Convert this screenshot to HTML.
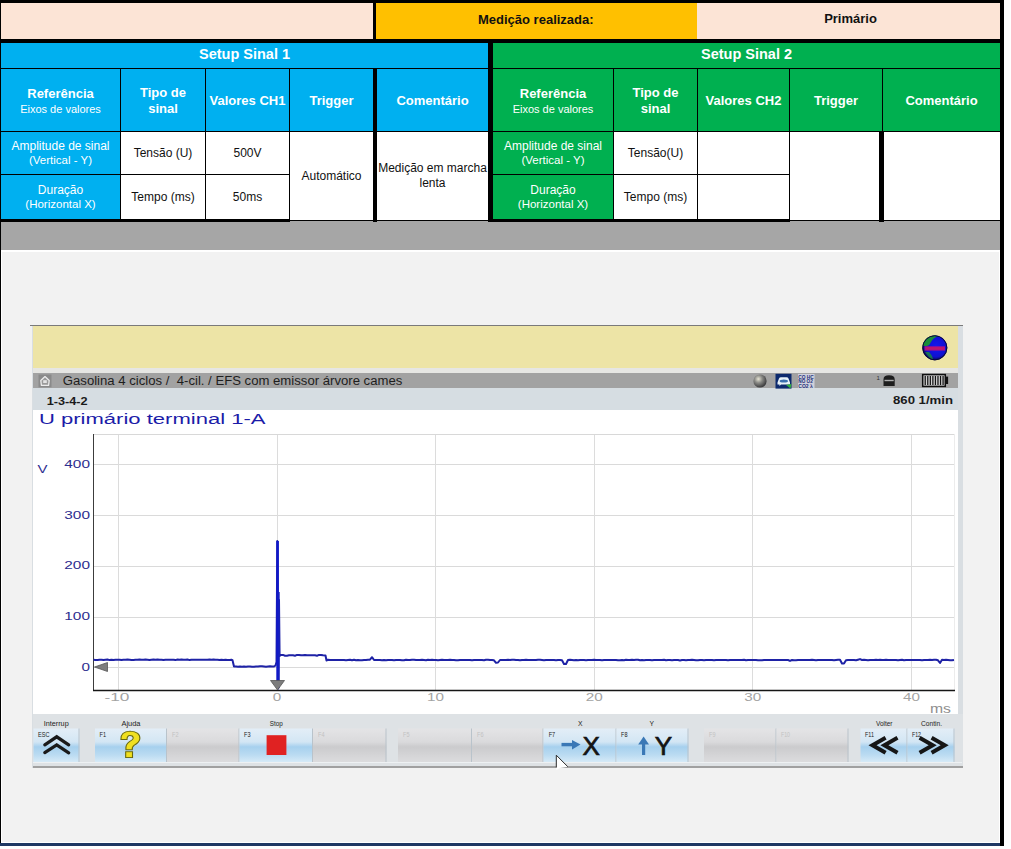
<!DOCTYPE html>
<html><head><meta charset="utf-8">
<style>
html,body{margin:0;padding:0;}
body{width:1011px;height:849px;position:relative;overflow:hidden;background:#fff;font-family:"Liberation Sans",sans-serif;}
.r{position:absolute;}
.c{position:absolute;display:flex;align-items:center;justify-content:center;text-align:center;white-space:nowrap;flex-direction:column;}
.pe{background:#FCE4D6;}
.bl{background:#00B0F0;}
.gr{background:#00B050;}
.wh{background:#fff;}
.hb{font-weight:bold;font-size:13px;color:#fff;line-height:16px;padding-top:2px;box-sizing:border-box;}
.hs{font-size:11px;font-weight:normal;line-height:14px;}
.rl{font-size:12px;color:#fff;line-height:14px;}
.rl span{font-size:11.5px;}
.dt{font-size:12px;color:#111;line-height:15px;}
</style></head>
<body>
<!-- black base for table -->
<div class="r" style="left:0;top:0;width:1004px;height:222px;background:#000"></div>
<!-- row 1 -->
<div class="c pe" style="left:1px;top:3px;width:372px;height:36px"></div>
<div class="c" style="left:376px;top:3px;width:321px;height:36px;background:#FFC000;font-weight:bold;font-size:13px;color:#111;align-items:flex-start"><span style="padding-left:102px;position:relative;top:-2px">Medição realizada:</span></div>
<div class="c pe" style="left:697px;top:3px;width:303px;height:36px;font-weight:bold;font-size:13px;color:#111"><span style="margin-left:4px;position:relative;top:-2.5px">Primário</span></div>
<!-- row 2 -->
<div class="c bl" style="left:1px;top:43px;width:487px;height:25px;font-weight:bold;font-size:14.5px;color:#fff"><span style="position:relative;top:-2px">Setup Sinal 1</span></div>
<div class="c gr" style="left:493px;top:43px;width:507px;height:25px;font-weight:bold;font-size:14.5px;color:#fff"><span style="position:relative;top:-2px">Setup Sinal 2</span></div>
<!-- row 3 headers blue -->
<div class="c bl hb" style="left:1px;top:69px;width:119px;height:62px">Referência<span class="hs">Eixos de valores</span></div>
<div class="c bl hb" style="left:121px;top:69px;width:84px;height:62px">Tipo de<br>sinal</div>
<div class="c bl hb" style="left:206px;top:69px;width:83px;height:62px">Valores CH1</div>
<div class="c bl hb" style="left:290px;top:69px;width:83px;height:62px">Trigger</div>
<div class="c bl hb" style="left:377px;top:69px;width:111px;height:62px">Comentário</div>
<!-- row 3 headers green -->
<div class="c gr hb" style="left:493px;top:69px;width:120px;height:62px">Referência<span class="hs">Eixos de valores</span></div>
<div class="c gr hb" style="left:614px;top:69px;width:83px;height:62px">Tipo de<br>sinal</div>
<div class="c gr hb" style="left:698px;top:69px;width:91px;height:62px">Valores CH2</div>
<div class="c gr hb" style="left:790px;top:69px;width:92px;height:62px">Trigger</div>
<div class="c gr hb" style="left:883px;top:69px;width:117px;height:62px">Comentário</div>
<!-- rows 4-5 blue side -->
<div class="c bl rl" style="left:1px;top:132px;width:119px;height:42px">Amplitude de sinal<span>(Vertical - Y)</span></div>
<div class="c bl rl" style="left:1px;top:175px;width:119px;height:44px">Duração<span>(Horizontal X)</span></div>
<div class="c wh dt" style="left:121px;top:132px;width:84px;height:42px">Tensão (U)</div>
<div class="c wh dt" style="left:121px;top:175px;width:84px;height:44px">Tempo (ms)</div>
<div class="c wh dt" style="left:206px;top:132px;width:83px;height:42px">500V</div>
<div class="c wh dt" style="left:206px;top:175px;width:83px;height:44px">50ms</div>
<div class="c wh dt" style="left:290px;top:132px;width:83px;height:88px">Automático</div>
<div class="c wh dt" style="left:377px;top:132px;width:111px;height:88px">Medição em marcha<br>lenta</div>
<!-- rows 4-5 green side -->
<div class="c gr rl" style="left:493px;top:132px;width:120px;height:42px">Amplitude de sinal<span>(Vertical - Y)</span></div>
<div class="c gr rl" style="left:493px;top:175px;width:120px;height:44px">Duração<span>(Horizontal X)</span></div>
<div class="c wh dt" style="left:614px;top:132px;width:83px;height:42px">Tensão(U)</div>
<div class="c wh dt" style="left:614px;top:175px;width:83px;height:44px">Tempo (ms)</div>
<div class="c wh" style="left:698px;top:132px;width:91px;height:42px"></div>
<div class="c wh" style="left:698px;top:175px;width:91px;height:44px"></div>
<div class="c wh" style="left:790px;top:132px;width:89px;height:88px"></div>
<div class="c wh" style="left:884px;top:132px;width:116px;height:88px"></div>

<!-- gray band & background -->
<div class="r" style="left:1px;top:222px;width:999px;height:28px;background:#A6A6A6"></div>
<div class="r" style="left:290px;top:221px;width:83px;height:1px;background:#A6A6A6"></div>
<div class="r" style="left:377px;top:221px;width:111px;height:1px;background:#A6A6A6"></div>
<div class="r" style="left:790px;top:221px;width:89px;height:1px;background:#A6A6A6"></div>
<div class="r" style="left:884px;top:221px;width:116px;height:1px;background:#A6A6A6"></div>
<div class="r" style="left:0;top:222px;width:1px;height:624px;background:#000"></div>
<div class="r" style="left:1px;top:250px;width:999px;height:593px;background:#fff"></div>
<div class="r" style="left:2px;top:252px;width:997px;height:590px;background:#F2F2F2"></div>
<div class="r" style="left:0;top:843px;width:1000px;height:3px;background:#1F3864"></div>
<div class="r" style="left:1000px;top:0;width:4px;height:846px;background:#000"></div>

<!-- oscilloscope screenshot -->
<div class="r" style="left:32px;top:325px;width:931px;height:443px;background:#D9DEE2"></div>
<div class="r" style="left:30px;top:325px;width:933px;height:1px;background:#7a7a7a"></div>
<div class="r" style="left:33px;top:326px;width:925px;height:42px;background:#EDE4A6"></div>
<div class="r" style="left:33px;top:368px;width:925px;height:5px;background:#E6E6E3"></div>
<div class="r" style="left:33px;top:373px;width:925px;height:15px;background:#A2A2A2"></div>
<div class="r" style="left:33px;top:388px;width:925px;height:22px;background:#D6DDE2"></div>
<div class="r" style="left:33px;top:410px;width:925px;height:304px;background:#fff"></div>
<div class="r" style="left:33px;top:714px;width:930px;height:52px;background:#DEE2E5"></div>
<div class="r" style="left:33px;top:766px;width:930px;height:2px;background:#a0a0a0"></div>

<svg class="r" style="left:0;top:0" width="1011" height="849" viewBox="0 0 1011 849" font-family="Liberation Sans, sans-serif">
<defs>
<linearGradient id="gb" x1="0" y1="0" x2="0" y2="1">
<stop offset="0" stop-color="#e3eef7"/><stop offset="0.4" stop-color="#d3e6f4"/><stop offset="0.55" stop-color="#a6d0ee"/><stop offset="0.8" stop-color="#bcdcf2"/><stop offset="1" stop-color="#d6eaf7"/>
</linearGradient>
<linearGradient id="gg" x1="0" y1="0" x2="0" y2="1">
<stop offset="0" stop-color="#e4e4e6"/><stop offset="0.4" stop-color="#dadadc"/><stop offset="0.55" stop-color="#cbcbcd"/><stop offset="1" stop-color="#dcdcde"/>
</linearGradient>
<radialGradient id="ball" cx="0.38" cy="0.35" r="0.65">
<stop offset="0" stop-color="#e6e4d4"/><stop offset="0.45" stop-color="#8a8a86"/><stop offset="1" stop-color="#3c3c3e"/>
</radialGradient>
</defs>
<line x1="94" y1="667.5" x2="954" y2="667.5" stroke="#dadada" stroke-width="1"/>
<line x1="94" y1="617.5" x2="954" y2="617.5" stroke="#dadada" stroke-width="1"/>
<line x1="94" y1="566.5" x2="954" y2="566.5" stroke="#dadada" stroke-width="1"/>
<line x1="94" y1="515.5" x2="954" y2="515.5" stroke="#dadada" stroke-width="1"/>
<line x1="94" y1="464.5" x2="954" y2="464.5" stroke="#dadada" stroke-width="1"/>
<line x1="118.5" y1="434" x2="118.5" y2="690" stroke="#dcdcdc" stroke-width="1"/>
<line x1="277.5" y1="434" x2="277.5" y2="690" stroke="#dcdcdc" stroke-width="1"/>
<line x1="435.5" y1="434" x2="435.5" y2="690" stroke="#dcdcdc" stroke-width="1"/>
<line x1="594.5" y1="434" x2="594.5" y2="690" stroke="#dcdcdc" stroke-width="1"/>
<line x1="752.5" y1="434" x2="752.5" y2="690" stroke="#dcdcdc" stroke-width="1"/>
<line x1="911.5" y1="434" x2="911.5" y2="690" stroke="#dcdcdc" stroke-width="1"/>
<line x1="94" y1="434.5" x2="954" y2="434.5" stroke="#d8d8d8" stroke-width="1"/>
<line x1="954.5" y1="434" x2="954.5" y2="690" stroke="#ececec" stroke-width="1"/>
<line x1="93.5" y1="434" x2="93.5" y2="691" stroke="#3c3c3c" stroke-width="1"/>
<line x1="93" y1="690.5" x2="955" y2="690.5" stroke="#161616" stroke-width="1.3"/>
<text x="81.5" y="671.0" font-size="11" fill="#2d2d8f" textLength="8.5" lengthAdjust="spacingAndGlyphs">0</text>
<text x="64.3" y="620.2" font-size="11" fill="#2d2d8f" textLength="25.7" lengthAdjust="spacingAndGlyphs">100</text>
<text x="64.3" y="569.4" font-size="11" fill="#2d2d8f" textLength="25.7" lengthAdjust="spacingAndGlyphs">200</text>
<text x="64.3" y="518.7" font-size="11" fill="#2d2d8f" textLength="25.7" lengthAdjust="spacingAndGlyphs">300</text>
<text x="64.3" y="467.9" font-size="11" fill="#2d2d8f" textLength="25.7" lengthAdjust="spacingAndGlyphs">400</text>
<text x="37.5" y="472.7" font-size="11" fill="#2d2d8f" textLength="10" lengthAdjust="spacingAndGlyphs">V</text>
<text x="104.4" y="701" font-size="11" fill="#a3a3a3" textLength="25" lengthAdjust="spacingAndGlyphs">-10</text>
<text x="272.8" y="701" font-size="11" fill="#a3a3a3" textLength="8.5" lengthAdjust="spacingAndGlyphs">0</text>
<text x="427.1" y="701" font-size="11" fill="#a3a3a3" textLength="17" lengthAdjust="spacingAndGlyphs">10</text>
<text x="585.7" y="701" font-size="11" fill="#a3a3a3" textLength="17" lengthAdjust="spacingAndGlyphs">20</text>
<text x="744.3" y="701" font-size="11" fill="#a3a3a3" textLength="17" lengthAdjust="spacingAndGlyphs">30</text>
<text x="902.9" y="701" font-size="11" fill="#a3a3a3" textLength="17" lengthAdjust="spacingAndGlyphs">40</text>
<text x="930" y="712.6" font-size="13" fill="#8e8e8e" textLength="21" lengthAdjust="spacingAndGlyphs">ms</text>
<path d="M93.5,659.8 L95.5,660.1 L97.5,660.1 L99.5,659.8 L101.5,659.8 L103.5,660.1 L105.5,659.8 L107.5,659.5 L109.5,660.1 L111.5,659.8 L113.5,660.1 L115.5,659.8 L117.5,659.8 L119.5,659.8 L121.5,660.1 L123.5,659.8 L125.5,659.8 L127.5,659.5 L129.5,659.8 L131.5,660.1 L133.5,660.1 L135.5,659.8 L137.5,659.8 L139.5,659.5 L141.5,659.8 L143.5,659.8 L145.5,659.5 L147.5,659.8 L149.5,660.1 L151.5,659.8 L153.5,659.5 L155.5,659.8 L157.5,659.5 L159.5,659.8 L161.5,659.8 L163.5,660.1 L165.5,659.8 L167.5,659.8 L169.5,659.8 L171.5,659.8 L173.5,659.8 L175.5,660.1 L177.5,659.5 L179.5,659.8 L181.5,659.5 L183.5,659.8 L185.5,659.8 L187.5,659.5 L189.5,660.1 L191.5,659.8 L193.5,659.8 L195.5,659.8 L197.5,659.8 L199.5,659.8 L201.5,659.8 L203.5,659.8 L205.5,659.8 L207.5,659.8 L209.5,659.5 L211.5,659.8 L213.5,659.5 L215.5,659.8 L217.5,659.8 L219.5,660.1 L221.5,659.8 L223.5,660.1 L225.5,659.8 L227.5,660.1 L229.5,660.1 L231.5,659.8 L232.5,660.2 L234.0,666.5 L236.0,666.5 L238.0,666.8 L240.0,666.5 L242.0,666.8 L244.0,666.5 L246.0,666.8 L248.0,666.5 L250.0,666.5 L252.0,666.8 L254.0,666.8 L256.0,666.5 L258.0,666.5 L260.0,666.2 L262.0,666.2 L264.0,666.5 L266.0,666.8 L268.0,666.5 L270.0,666.2 L272.0,666.5 L274.0,666.5 L275.5,665.5 L276.5,662.0 L277.3,541.0 L278.2,688.5 L279.0,600.0 L279.6,656.0 L281.0,655.0 L283.0,654.9 L285.0,655.7 L287.0,655.7 L289.0,655.3 L291.0,655.3 L293.0,655.3 L295.0,655.7 L297.0,654.9 L299.0,654.9 L301.0,655.3 L303.0,655.3 L305.0,654.9 L307.0,655.3 L309.0,655.3 L311.0,655.3 L313.0,655.3 L315.0,655.3 L317.0,655.7 L319.0,654.9 L321.0,654.9 L323.0,655.3 L325.5,655.5 L326.5,660.5 L328.0,659.7 L330.0,660.0 L332.0,660.0 L334.0,660.0 L336.0,660.0 L338.0,660.0 L340.0,660.0 L342.0,660.0 L344.0,660.0 L346.0,660.3 L348.0,660.0 L350.0,659.7 L352.0,660.3 L354.0,659.7 L356.0,660.3 L358.0,660.0 L360.0,660.3 L362.0,660.3 L364.0,660.0 L366.0,660.0 L368.0,659.7 L370.0,659.7 L372.0,657.2 L374.0,660.0 L376.0,660.0 L378.0,660.0 L380.0,660.0 L382.0,660.3 L384.0,660.0 L386.0,660.3 L388.0,660.0 L390.0,660.0 L392.0,660.0 L394.0,660.3 L396.0,660.0 L398.0,660.0 L400.0,660.0 L402.0,660.3 L404.0,660.3 L406.0,659.7 L408.0,660.0 L410.0,660.0 L412.0,659.7 L414.0,659.7 L416.0,660.0 L418.0,660.0 L420.0,660.0 L422.0,659.7 L424.0,660.0 L426.0,660.3 L428.0,659.7 L430.0,660.0 L432.0,659.7 L434.0,660.0 L436.0,660.0 L438.0,660.3 L440.0,660.0 L442.0,659.7 L444.0,660.0 L446.0,660.0 L448.0,660.0 L450.0,659.7 L452.0,660.0 L454.0,660.0 L456.0,660.3 L458.0,660.3 L460.0,660.0 L462.0,660.0 L464.0,660.0 L466.0,660.0 L468.0,660.0 L470.0,660.0 L472.0,660.3 L474.0,660.0 L476.0,660.0 L478.0,660.0 L480.0,660.0 L482.0,660.0 L484.0,660.3 L486.0,659.7 L488.0,659.7 L490.0,660.0 L492.0,660.0 L494.0,660.3 L496.0,662.8 L498.0,662.5 L500.0,660.0 L502.0,660.0 L504.0,660.0 L506.0,660.0 L508.0,659.7 L510.0,660.0 L512.0,659.7 L514.0,659.7 L516.0,660.0 L518.0,660.0 L520.0,660.3 L522.0,660.0 L524.0,660.0 L526.0,659.7 L528.0,660.0 L530.0,660.0 L532.0,660.0 L534.0,660.0 L536.0,660.0 L538.0,659.7 L540.0,659.7 L542.0,660.0 L544.0,660.3 L546.0,660.0 L548.0,660.0 L550.0,660.0 L552.0,660.0 L554.0,660.0 L556.0,660.3 L558.0,660.0 L560.0,660.0 L562.0,660.3 L564.0,664.0 L566.0,664.0 L568.0,660.0 L570.0,659.7 L572.0,660.0 L574.0,660.3 L576.0,660.0 L578.0,660.3 L580.0,660.0 L582.0,660.0 L584.0,660.0 L586.0,660.3 L588.0,660.0 L590.0,660.0 L592.0,660.0 L594.0,659.7 L596.0,660.0 L598.0,660.0 L600.0,660.0 L602.0,660.3 L604.0,660.0 L606.0,660.0 L608.0,660.0 L610.0,660.0 L612.0,660.0 L614.0,660.0 L616.0,660.0 L618.0,660.3 L620.0,660.3 L622.0,660.0 L624.0,660.3 L626.0,659.7 L628.0,660.0 L630.0,660.0 L632.0,659.7 L634.0,660.0 L636.0,659.7 L638.0,659.7 L640.0,660.3 L642.0,660.0 L644.0,660.3 L646.0,660.0 L648.0,660.0 L650.0,660.0 L652.0,660.3 L654.0,660.0 L656.0,660.0 L658.0,660.0 L660.0,660.0 L662.0,660.0 L664.0,659.7 L666.0,660.3 L668.0,660.0 L670.0,660.0 L672.0,660.3 L674.0,660.0 L676.0,660.0 L678.0,660.0 L680.0,660.5 L682.0,660.0 L684.0,660.0 L686.0,660.3 L688.0,660.0 L690.0,660.0 L692.0,659.7 L694.0,660.0 L696.0,660.3 L698.0,660.3 L700.0,660.0 L702.0,660.0 L704.0,660.3 L706.0,660.0 L708.0,660.0 L710.0,660.0 L712.0,660.0 L714.0,660.3 L716.0,660.0 L718.0,660.0 L720.0,660.0 L722.0,660.0 L724.0,660.0 L726.0,660.0 L728.0,660.3 L730.0,660.0 L732.0,660.0 L734.0,660.0 L736.0,660.0 L738.0,660.0 L740.0,660.0 L742.0,660.0 L744.0,659.7 L746.0,660.3 L748.0,660.0 L750.0,660.0 L752.0,660.0 L754.0,660.0 L756.0,660.0 L758.0,660.3 L760.0,660.3 L762.0,660.3 L764.0,660.0 L766.0,660.0 L768.0,660.0 L770.0,660.0 L772.0,660.0 L774.0,660.0 L776.0,660.0 L778.0,660.0 L780.0,660.0 L782.0,660.0 L784.0,660.0 L786.0,660.0 L788.0,660.0 L790.0,660.9 L792.0,660.0 L794.0,660.3 L796.0,660.3 L798.0,660.0 L800.0,660.0 L802.0,660.0 L804.0,660.0 L806.0,660.0 L808.0,660.0 L810.0,660.0 L812.0,659.7 L814.0,660.0 L816.0,660.3 L818.0,660.0 L820.0,660.0 L822.0,660.0 L824.0,660.0 L826.0,660.0 L828.0,660.0 L830.0,660.0 L832.0,660.0 L834.0,660.3 L836.0,660.0 L838.0,659.7 L840.0,659.7 L842.0,663.5 L844.0,663.5 L846.0,660.3 L848.0,660.0 L850.0,660.0 L852.0,660.0 L854.0,660.0 L856.0,660.3 L858.0,659.7 L860.0,659.1 L862.0,660.0 L864.0,659.7 L866.0,660.0 L868.0,660.3 L870.0,660.0 L872.0,660.0 L874.0,660.0 L876.0,659.7 L878.0,660.0 L880.0,659.7 L882.0,660.0 L884.0,660.0 L886.0,659.7 L888.0,660.0 L890.0,660.0 L892.0,660.0 L894.0,660.0 L896.0,660.0 L898.0,660.3 L900.0,660.0 L902.0,659.7 L904.0,660.3 L906.0,660.0 L908.0,660.0 L910.0,660.0 L912.0,660.0 L914.0,660.0 L916.0,660.0 L918.0,660.0 L920.0,660.0 L922.0,660.3 L924.0,660.0 L926.0,660.0 L928.0,660.0 L930.0,659.7 L932.0,660.0 L934.0,659.7 L936.0,659.7 L938.0,660.3 L940.0,663.0 L942.0,659.7 L944.0,660.0 L946.0,659.7 L948.0,660.0 L950.0,660.3 L952.0,660.3 L954.0,660.0" fill="none" stroke="#1e22a6" stroke-width="2" stroke-linejoin="round"/>
<path d="M277.6,541 L277.6,688" stroke="#1018c8" stroke-width="2.6"/>
<path d="M279,592 L279,688" stroke="#1520c0" stroke-width="1.4"/>
<path d="M94.5,667 L107.5,662.5 L107.5,671.5 Z" fill="#7d7d7d" stroke="#555" stroke-width="0.8"/>
<path d="M270.5,680.5 L284.5,680.5 L277.5,690 Z" fill="#7d7d7d" stroke="#555" stroke-width="0.8"/>
<text x="39" y="424.2" font-size="15.5" fill="#1c1ca8" textLength="226.5" lengthAdjust="spacingAndGlyphs">U primário terminal 1-A</text>
<text x="46.7" y="404.6" font-size="11.5" font-weight="bold" fill="#1a1a1a" textLength="41" lengthAdjust="spacingAndGlyphs">1-3-4-2</text>
<text x="893" y="404.4" font-size="11.5" font-weight="bold" fill="#1a1a1a" textLength="60" lengthAdjust="spacingAndGlyphs">860 1/min</text>
<text x="62.8" y="385.3" font-size="12.3" fill="#1e1e1e" textLength="339.5" lengthAdjust="spacingAndGlyphs">Gasolina 4 ciclos / &#160;4-cil. / EFS com emissor árvore cames</text>
<rect x="38.5" y="374.5" width="13" height="12.8" fill="#8a8a8a"/>
<path d="M40.8,380.5 L45,376.6 L49.2,380.5 L48.6,385.4 L41.4,385.4 Z" fill="#9a9a9a" stroke="#ececec" stroke-width="1.3" stroke-linejoin="round"/>
<rect x="43.2" y="380.2" width="3.6" height="2.8" fill="#e4e4e4"/>
<radialGradient id="glb" cx="0.55" cy="0.45" r="0.55"><stop offset="0" stop-color="#1418f0"/><stop offset="0.75" stop-color="#1010d0"/><stop offset="1" stop-color="#0a0a50"/></radialGradient>
<clipPath id="gclip"><circle cx="934.8" cy="347.8" r="12.3"/></clipPath>
<circle cx="934.8" cy="347.8" r="12.4" fill="url(#glb)"/>
<g clip-path="url(#gclip)">
<path d="M921,346 Q922,338 930,335 Q936,334 938,336 Q933,338 931,342 Q930,345 927,346 Z" fill="#1c9a2a" opacity="0.9"/>
<path d="M925,352 Q929,358 933,360 Q933,356 929,352 Z" fill="#1a8a40" opacity="0.8"/>
<rect x="924.5" y="346.3" width="20.5" height="4.3" fill="#a8108c"/>
<rect x="926" y="347.2" width="18" height="2.4" fill="#c81860" opacity="0.7"/>
</g>
<circle cx="934.8" cy="347.8" r="12.1" fill="none" stroke="#06063a" stroke-width="1"/>
<circle cx="760" cy="381" r="6.6" fill="url(#ball)"/>
<rect x="775.5" y="373.8" width="16" height="14.8" fill="#0d2a6e"/>
<path d="M777.5,382.5 L779,378.5 Q779.5,377.2 781,377.2 L786.5,377.2 Q788,377.2 788.5,378.5 L790,382.5 L790,384.5 L781,384.5 L779.5,386 L779.5,384.5 L777.5,384.5 Z" fill="#e8f2f8"/>
<ellipse cx="783.8" cy="381" rx="4.2" ry="1.6" fill="#3a70b0"/>
<path d="M786,385 L790.5,388.5 L791.5,384 Z" fill="#30b040"/>
<rect x="798" y="374" width="16.5" height="14" fill="#cfd0dc"/>
<text x="798.3" y="378.6" font-size="5" font-weight="bold" fill="#24307a" textLength="15.5" lengthAdjust="spacingAndGlyphs">CO HC</text>
<text x="798.3" y="383.2" font-size="5" font-weight="bold" fill="#24307a" textLength="14.5" lengthAdjust="spacingAndGlyphs">NO O2</text>
<text x="798.3" y="387.8" font-size="5" font-weight="bold" fill="#24307a" textLength="14.5" lengthAdjust="spacingAndGlyphs">CO2 λ</text>
<text x="876.5" y="380" font-size="6" fill="#333">1</text>
<path d="M883.5,386 L883.5,379.5 Q883.5,375.3 889,375.3 Q894.7,375.3 894.7,379.5 L894.7,386 Z" fill="#1e1e1e"/>
<rect x="884.5" y="379.8" width="9.2" height="1.4" fill="#b0b0b0"/>
<rect x="922.7" y="374.6" width="22.6" height="11.8" fill="#d2d2d2" stroke="#0e0e0e" stroke-width="1.5"/>
<rect x="924.60" y="376" width="1.25" height="9" fill="#111"/>
<rect x="927.15" y="376" width="1.25" height="9" fill="#111"/>
<rect x="929.70" y="376" width="1.25" height="9" fill="#111"/>
<rect x="932.25" y="376" width="1.25" height="9" fill="#111"/>
<rect x="934.80" y="376" width="1.25" height="9" fill="#111"/>
<rect x="937.35" y="376" width="1.25" height="9" fill="#111"/>
<rect x="939.90" y="376" width="1.25" height="9" fill="#111"/>
<rect x="942.45" y="376" width="1.25" height="9" fill="#111"/>
<rect x="945.3" y="376.6" width="2.8" height="7.4" fill="#111"/>
<rect x="33.5" y="728.5" width="46.0" height="33.5" fill="url(#gb)"/>
<line x1="79.0" y1="728.5" x2="79.0" y2="762" stroke="#b9c3cb" stroke-width="1"/>
<rect x="95" y="728.5" width="72" height="33.5" fill="url(#gb)"/>
<line x1="166.5" y1="728.5" x2="166.5" y2="762" stroke="#b9c3cb" stroke-width="1"/>
<rect x="167" y="728.5" width="72.5" height="33.5" fill="url(#gg)"/>
<line x1="239.0" y1="728.5" x2="239.0" y2="762" stroke="#b9c3cb" stroke-width="1"/>
<rect x="239.5" y="728.5" width="73.5" height="33.5" fill="url(#gb)"/>
<line x1="312.5" y1="728.5" x2="312.5" y2="762" stroke="#b9c3cb" stroke-width="1"/>
<rect x="313" y="728.5" width="73.5" height="33.5" fill="url(#gg)"/>
<line x1="386.0" y1="728.5" x2="386.0" y2="762" stroke="#b9c3cb" stroke-width="1"/>
<rect x="398" y="728.5" width="74" height="33.5" fill="url(#gg)"/>
<line x1="471.5" y1="728.5" x2="471.5" y2="762" stroke="#b9c3cb" stroke-width="1"/>
<rect x="472" y="728.5" width="71.5" height="33.5" fill="url(#gg)"/>
<line x1="543.0" y1="728.5" x2="543.0" y2="762" stroke="#b9c3cb" stroke-width="1"/>
<rect x="543.5" y="728.5" width="73.0" height="33.5" fill="url(#gb)"/>
<line x1="616.0" y1="728.5" x2="616.0" y2="762" stroke="#b9c3cb" stroke-width="1"/>
<rect x="616.5" y="728.5" width="72.0" height="33.5" fill="url(#gb)"/>
<line x1="688.0" y1="728.5" x2="688.0" y2="762" stroke="#b9c3cb" stroke-width="1"/>
<rect x="704" y="728.5" width="72.5" height="33.5" fill="url(#gg)"/>
<line x1="776.0" y1="728.5" x2="776.0" y2="762" stroke="#b9c3cb" stroke-width="1"/>
<rect x="776.5" y="728.5" width="72.0" height="33.5" fill="url(#gg)"/>
<line x1="848.0" y1="728.5" x2="848.0" y2="762" stroke="#b9c3cb" stroke-width="1"/>
<rect x="860.5" y="728.5" width="47.0" height="33.5" fill="url(#gb)"/>
<line x1="907.0" y1="728.5" x2="907.0" y2="762" stroke="#b9c3cb" stroke-width="1"/>
<rect x="907.5" y="728.5" width="47.0" height="33.5" fill="url(#gb)"/>
<line x1="954.0" y1="728.5" x2="954.0" y2="762" stroke="#b9c3cb" stroke-width="1"/>
<rect x="33" y="762" width="929" height="1" fill="#eef1f3"/>
<text x="43.7" y="726.3" font-size="6.5" fill="#222" textLength="25" lengthAdjust="spacingAndGlyphs">Interrup</text>
<text x="121.5" y="726.3" font-size="6.5" fill="#222" textLength="19" lengthAdjust="spacingAndGlyphs">Ajuda</text>
<text x="269.8" y="726.3" font-size="6.5" fill="#222" textLength="13" lengthAdjust="spacingAndGlyphs">Stop</text>
<text x="578" y="726.3" font-size="6.5" fill="#222" textLength="4.5" lengthAdjust="spacingAndGlyphs">X</text>
<text x="649.5" y="726.3" font-size="6.5" fill="#222" textLength="4.5" lengthAdjust="spacingAndGlyphs">Y</text>
<text x="876" y="726.3" font-size="6.5" fill="#222" textLength="16.5" lengthAdjust="spacingAndGlyphs">Volter</text>
<text x="921" y="726.3" font-size="6.5" fill="#222" textLength="21" lengthAdjust="spacingAndGlyphs">Contin.</text>
<text x="38" y="737.3" font-size="6.5" fill="#222" textLength="11.5" lengthAdjust="spacingAndGlyphs">ESC</text>
<text x="99.5" y="737.3" font-size="6.5" fill="#222" textLength="6.5" lengthAdjust="spacingAndGlyphs">F1</text>
<text x="172" y="737.3" font-size="6.5" fill="#c2c2c2" textLength="6.5" lengthAdjust="spacingAndGlyphs">F2</text>
<text x="244" y="737.3" font-size="6.5" fill="#222" textLength="6.5" lengthAdjust="spacingAndGlyphs">F3</text>
<text x="318" y="737.3" font-size="6.5" fill="#c2c2c2" textLength="6.5" lengthAdjust="spacingAndGlyphs">F4</text>
<text x="403" y="737.3" font-size="6.5" fill="#c2c2c2" textLength="6.5" lengthAdjust="spacingAndGlyphs">F5</text>
<text x="477" y="737.3" font-size="6.5" fill="#c2c2c2" textLength="6.5" lengthAdjust="spacingAndGlyphs">F6</text>
<text x="548.7" y="737.3" font-size="6.5" fill="#222" textLength="6.5" lengthAdjust="spacingAndGlyphs">F7</text>
<text x="621" y="737.3" font-size="6.5" fill="#222" textLength="6.5" lengthAdjust="spacingAndGlyphs">F8</text>
<text x="709" y="737.3" font-size="6.5" fill="#c2c2c2" textLength="6.5" lengthAdjust="spacingAndGlyphs">F9</text>
<text x="781" y="737.3" font-size="6.5" fill="#c2c2c2" textLength="9" lengthAdjust="spacingAndGlyphs">F10</text>
<text x="865" y="737.3" font-size="6.5" fill="#222" textLength="9" lengthAdjust="spacingAndGlyphs">F11</text>
<text x="912" y="737.3" font-size="6.5" fill="#222" textLength="9" lengthAdjust="spacingAndGlyphs">F12</text>
<path d="M44.8,744.8 L56.7,736.8 L68.7,744.8 M44.8,752.6 L56.7,744.8 L68.7,752.8" fill="none" stroke="#1a1a1a" stroke-width="3.2" stroke-linecap="round" stroke-linejoin="miter"/>
<g transform="translate(129.7,0) scale(1.22,1.04) translate(-129.7,-29)">
<path d="M122.5,740 Q122,732.5 130,732 Q138.5,732.5 138,739.5 Q137.5,743 133.5,745.5 Q131.5,747 131.8,750 L126.6,750 Q126,745 129.5,742.2 Q132.8,740 132.6,738.3 Q132.2,736.2 129.8,736.3 Q127.5,736.4 127.5,740 Z" fill="#f0e020" stroke="#6a6a10" stroke-width="0.9"/>
<rect x="126.4" y="751.8" width="5.6" height="5.6" fill="#f0e020" stroke="#6a6a10" stroke-width="0.9"/>
</g>
<rect x="266.6" y="735.2" width="19.8" height="19.8" fill="#e02222"/>
<path d="M561.5,744.6 L573.5,744.6" stroke="#3a78b6" stroke-width="3.4"/>
<path d="M572,740 L580.5,744.6 L572,749.4 Z" fill="#3a78b6"/>
<text x="582.5" y="755" font-size="26" fill="#141414" stroke="#141414" stroke-width="0.7" textLength="17.4" lengthAdjust="spacingAndGlyphs">X</text>
<path d="M643.6,743.5 L643.6,755" stroke="#3a78b6" stroke-width="3.2"/>
<path d="M638.2,744.5 L643.6,736.4 L649,744.5 Z" fill="#3a78b6"/>
<text x="654.7" y="755" font-size="26" fill="#141414" stroke="#141414" stroke-width="0.7" textLength="17.4" lengthAdjust="spacingAndGlyphs">Y</text>
<path d="M885.6,737.8 L872.5,745.2 L885.6,752.8 M897.5,737.8 L884.4,745.2 L897.5,752.8" fill="none" stroke="#161616" stroke-width="4"/>
<path d="M919.6,737.8 L932.7,745.2 L919.6,752.8 M931.6,737.8 L944.7,745.2 L931.6,752.8" fill="none" stroke="#161616" stroke-width="4"/>
<path d="M556.3,755.2 L556.3,770 L560,768 L567.8,766.7 Z" fill="#fff"/><path d="M556.3,767.5 L556.3,755.2 L567.8,766.7" fill="none" stroke="#2a2a2a" stroke-width="1"/>
</svg>
</body></html>
